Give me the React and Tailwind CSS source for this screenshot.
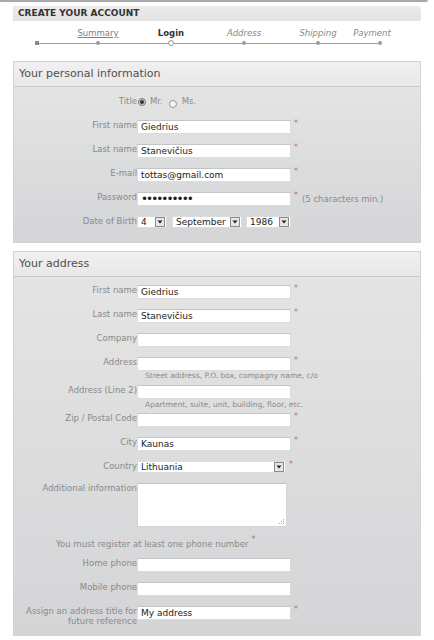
import React from "react";

function Req({ cls = "" }) {
  return <span className={"ml-[3px] text-[8px] leading-[8px] text-[#c46a6a] " + cls}>*</span>;
}

function Row({ label, children, cls = "", req, note, labelCls = "" }) {
  return (
    <div className={"flex items-start " + cls}>
      <div className={"w-[123px] shrink-0 text-right text-[8.5px] leading-[10px] text-[#8a8a8a] " + labelCls}>{label}</div>
      {children}
      {req && <Req />}
      {note}
    </div>
  );
}

function Input({ value = "", cls = "" }) {
  return (
    <div className={"w-[154px] h-[14px] bg-white border border-[#dcdcdc] border-t-[#c4c4c4] pl-[3px] text-[9px] leading-[12px] text-[#222] whitespace-nowrap overflow-hidden " + cls}>
      {value}
    </div>
  );
}

function Arrow() {
  return (
    <div className="w-[10px] h-[10px] mr-[1px] border border-[#8c8c8c] bg-[#e6e6e6] flex items-center justify-center">
      <svg width="6" height="4" viewBox="0 0 6 4">
        <path d="M0.5 0.5 L5.5 0.5 L3 3.5 Z" fill="#222" />
      </svg>
    </div>
  );
}

function Select({ value, cls }) {
  return (
    <div className={"h-[12px] bg-white border border-[#dcdcdc] flex items-center justify-between pl-[3px] text-[9px] leading-[10px] text-[#222] " + cls}>
      <span>{value}</span>
      <Arrow />
    </div>
  );
}

function Panel({ title, children, cls = "", bodyCls = "" }) {
  return (
    <div className={"w-[408px] border border-[#d4d4d4] " + cls}>
      <div className="h-[25px] bg-linear-to-b from-[#f0f0f0] to-[#e8e8e8] border-b border-[#c9c9c9] pl-[5px] pt-[1px] flex items-center text-[11px] text-[#505050]">
        {title}
      </div>
      <div className={"bg-linear-to-b from-[#e4e4e4] to-[#d4d5d7] " + bodyCls}>{children}</div>
    </div>
  );
}

export default function App() {
  return (
    <div className="w-[434px] h-[640px] bg-white overflow-hidden font-['DejaVu_Sans',Verdana,sans-serif]">
      <div className="w-[428px] h-[2px] bg-[#a9a9a9] rounded-br-[2px]" />
      <div className="px-[13px]">
        <div className="mt-[4px] w-[408px] h-[15px] bg-linear-to-b from-[#ececec] to-[#e2e2e2] rounded-r-[3px] pl-[5px] flex items-center text-[9px] font-bold text-[#333]">
          CREATE YOUR ACCOUNT
        </div>

        {/* steps */}
        <div className="mt-[7px] h-[10px] flex text-[8.5px] leading-[10px]">
          <div className="ml-[58px] w-[54px] text-center text-[#808080] underline">Summary</div>
          <div className="ml-[19px] w-[54px] text-center text-[#333] font-bold">Login</div>
          <div className="ml-[19px] w-[54px] text-center text-[#888] italic">Address</div>
          <div className="ml-[20px] w-[54px] text-center text-[#888] italic">Shipping</div>
          <div className="w-[54px] text-center text-[#888] italic">Payment</div>
        </div>
        <div className="mt-[2px] h-[6px] flex items-center">
          <div className="ml-[22px] w-[4px] h-[4px] bg-[#8a8a8a]" />
          <div className="w-[57px] h-px bg-[#a0a0a0]" />
          <div className="w-[4px] h-[4px] rounded-full bg-[#9a9a9a]" />
          <div className="w-[68px] h-px bg-[#a0a0a0]" />
          <div className="w-[6px] h-[6px] rounded-full border border-[#999] bg-white" />
          <div className="w-[68px] h-px bg-[#a0a0a0]" />
          <div className="w-[4px] h-[4px] rounded-full bg-[#9a9a9a]" />
          <div className="w-[70px] h-px bg-[#a0a0a0]" />
          <div className="w-[4px] h-[4px] rounded-full bg-[#9a9a9a]" />
          <div className="w-[58px] h-px bg-[#a0a0a0]" />
          <div className="w-[4px] h-[4px] rounded-full bg-[#9a9a9a]" />
        </div>

        <Panel title="Your personal information" cls="mt-[15px]" bodyCls="pt-[9px] pb-[14px]">
          <div className="flex items-start h-[14px]">
            <div className="w-[123px] shrink-0 text-right text-[8.5px] leading-[10px] text-[#8a8a8a]">Title</div>
            <div className="mt-[2px] ml-[1px] w-[8px] h-[8px] rounded-full border border-[#777] bg-[#d0d0d0] flex items-center justify-center">
              <div className="w-[4px] h-[4px] rounded-full bg-[#333]" />
            </div>
            <span className="ml-[4px] text-[8.5px] leading-[10px] text-[#8a8a8a]">Mr.</span>
            <div className="mt-[4px] ml-[6px] w-[8px] h-[8px] rounded-full border border-[#999] bg-[#f4f4f4]" />
            <span className="ml-[5px] text-[8.5px] leading-[10px] text-[#8a8a8a]">Ms.</span>
          </div>
          <Row label="First name" cls="mt-[10px]" req>
            <Input value="Giedrius" />
          </Row>
          <Row label="Last name" cls="mt-[10px]" req>
            <Input value="Stanevičius" />
          </Row>
          <Row label="E-mail" cls="mt-[10px]" req>
            <Input value="tottas@gmail.com" />
          </Row>
          <Row
            label="Password"
            cls="mt-[10px]"
            req
            note={<span className="ml-[4px] mt-[2px] text-[8.5px] leading-[10px] text-[#8a8a8a]">(5 characters min.)</span>}
          >
            <Input value="••••••••••" cls="text-[12px] tracking-[-2px] leading-[12px]" />
          </Row>
          <Row label="Date of Birth" cls="mt-[10px]">
            <Select value="4" cls="w-[30px]" />
            <Select value="September" cls="ml-[5px] w-[70px]" />
            <Select value="1986" cls="ml-[4px] w-[45px]" />
          </Row>
        </Panel>

        <Panel title="Your address" cls="mt-[8px]" bodyCls="pt-[8px] pb-[9px]">
          <Row label="First name" req>
            <Input value="Giedrius" />
          </Row>
          <Row label="Last name" cls="mt-[10px]" req>
            <Input value="Stanevičius" />
          </Row>
          <Row label="Company" cls="mt-[10px]">
            <Input />
          </Row>
          <Row label="Address" cls="mt-[10px]" req>
            <Input />
          </Row>
          <div className="pl-[131px] h-[10px] text-[7.5px] leading-[10px] text-[#8a8a8a]">
            Street address, P.O. box, compagny name, c/o
          </div>
          <Row label="Address (Line 2)" cls="mt-[4px]">
            <Input />
          </Row>
          <div className="mt-[1px] pl-[131px] h-[10px] text-[7.5px] leading-[10px] text-[#8a8a8a]">
            Apartment, suite, unit, building, floor, etc.
          </div>
          <Row label="Zip / Postal Code" cls="mt-[3px]" req>
            <Input />
          </Row>
          <Row label="City" cls="mt-[10px]" req>
            <Input value="Kaunas" />
          </Row>
          <Row label="Country" cls="mt-[10px]" req>
            <Select value="Lithuania" cls="w-[149px]" />
          </Row>
          <Row label="Additional information" cls="mt-[10px]">
            <div className="w-[150px] h-[44px] bg-white border border-[#d4d4d4] border-t-[#c4c4c4] flex items-end justify-end p-[1px]">
              <svg width="7" height="7" viewBox="0 0 7 7">
                <rect x="5" y="1" width="1" height="1" fill="#aaa" />
                <rect x="3" y="3" width="1" height="1" fill="#aaa" />
                <rect x="5" y="3" width="1" height="1" fill="#aaa" />
                <rect x="1" y="5" width="1" height="1" fill="#aaa" />
                <rect x="3" y="5" width="1" height="1" fill="#aaa" />
                <rect x="5" y="5" width="1" height="1" fill="#aaa" />
              </svg>
            </div>
          </Row>
          <div className="mt-[12px] h-[10px] pl-[42px] flex items-start text-[8.5px] leading-[10px] text-[#8a8a8a]">
            <span>You must register at least one phone number</span>
            <Req cls="-mt-[3px]" />
          </div>
          <Row label="Home phone" cls="mt-[9px]">
            <Input />
          </Row>
          <Row label="Mobile phone" cls="mt-[10px]">
            <Input />
          </Row>
          <Row label={<>Assign an address title for<br />future reference</>} cls="mt-[10px]" req>
            <Input value="My address" />
          </Row>
        </Panel>
      </div>
    </div>
  );
}
